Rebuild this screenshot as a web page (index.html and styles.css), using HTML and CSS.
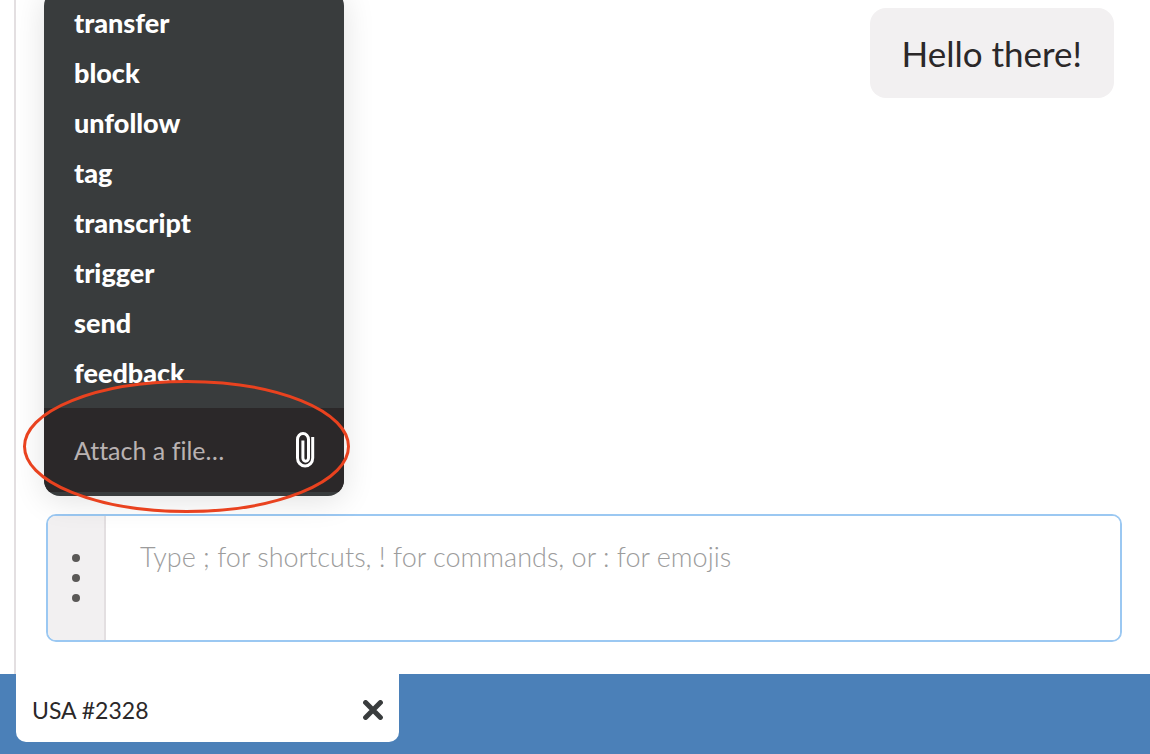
FILE: index.html
```html
<!DOCTYPE html>
<html lang="en">
<head>
<meta charset="utf-8">
<meta name="viewport" content="width=device-width, initial-scale=1">
<title>Chat</title>
<link rel="stylesheet" href="styles.css">
</head>
<body>
<main class="chat">
  <div class="messages">
    <p class="bubble">Hello there!</p>
  </div>
  <div class="composer-area">
    <form class="composer">
      <button class="more" type="button" aria-label="Commands" aria-expanded="true">
        <svg width="8" height="48" viewBox="0 0 8 48" aria-hidden="true"><circle cx="4" cy="4" r="4"/><circle cx="4" cy="24" r="4"/><circle cx="4" cy="44" r="4"/></svg>
      </button>
      <textarea class="input" aria-label="Message" placeholder="Type ; for shortcuts, ! for commands, or : for emojis"></textarea>
    </form>
    <div class="menu">
      <div class="commands">
        <button class="command" type="button">transfer</button>
        <button class="command" type="button">block</button>
        <button class="command" type="button">unfollow</button>
        <button class="command" type="button">tag</button>
        <button class="command" type="button">transcript</button>
        <button class="command" type="button">trigger</button>
        <button class="command" type="button">send</button>
        <button class="command" type="button">feedback</button>
      </div>
      <button class="attach" type="button">
        <span>Attach a file…</span>
        <svg class="clip" width="20" height="36" viewBox="0 0 20 36" aria-hidden="true"><path d="M17.7 5V26A7.6 8 0 0 1 2.5 26V7.5A5.5 6 0 0 1 13.5 7.5V26A2.8 3.3 0 0 1 7.9 26V8.5"/></svg>
      </button>
    </div>
    <svg class="highlight" viewBox="0 0 328 134" aria-hidden="true"><ellipse cx="163.5" cy="66.5" rx="162" ry="65"/></svg>
  </div>
</main>
<footer class="dock">
  <div class="tab">
    <span>USA #2328</span>
    <button class="close" type="button" aria-label="Close chat">
      <svg width="20" height="20" viewBox="0 0 20 20" aria-hidden="true"><path d="M2.6 2.6 17.4 17.4M17.4 2.6 2.6 17.4"/></svg>
    </button>
  </div>
</footer>
</body>
</html>
```

FILE: styles.css
```css
* {
  box-sizing: border-box;
}

body {
  margin: 0;
  min-height: 100vh;
  display: flex;
  flex-direction: column;
  overflow: hidden;
  background: #fff;
  color: #2b2829;
  font-family: Lato, "Open Sans", sans-serif;
  font-variant-ligatures: none;
}

button {
  border: 0;
  padding: 0;
  background: none;
  color: inherit;
  font: inherit;
  font-variant-ligatures: none;
  cursor: pointer;
}

svg {
  display: block;
}

.chat {
  flex: 1;
  display: flex;
  flex-direction: column;
  margin-left: 14px;
  border-left: 2px solid #e3dfe1;
}

.messages {
  flex: 1;
  display: flex;
  flex-direction: column;
  align-items: flex-end;
  padding: 8px 36px;
}

.bubble {
  margin: 0;
  padding: 22px 32px;
  border-radius: 16px;
  background: #f2f0f1;
  font-size: 35px;
  line-height: 46px;
}

.composer-area {
  position: relative;
  margin: 0 28px 32px 30px;
}

.composer {
  display: flex;
  height: 128px;
  border: 2px solid #9bc8f2;
  border-radius: 10px;
  overflow: hidden;
}

.more {
  width: 58px;
  display: flex;
  align-items: center;
  justify-content: center;
  border-right: 2px solid #e3dfe1;
  background: #f2f0f1;
  fill: #5a5857;
}

.input {
  flex: 1;
  padding: 24px 34px;
  border: 0;
  outline: 0;
  resize: none;
  background: #fff;
  color: #2b2829;
  font: 300 27px/34px Lato, "Open Sans", sans-serif;
  font-variant-ligatures: none;
}

.input::placeholder {
  color: #9c9c9c;
}

.menu {
  position: absolute;
  left: -2px;
  bottom: calc(100% + 18px);
  width: 300px;
  padding: 8px 0 4px;
  border-radius: 16px;
  overflow: hidden;
  background: #393c3d;
  box-shadow: 0 4px 32px rgba(0, 0, 0, 0.12);
}

.commands {
  display: flex;
  flex-direction: column;
  padding-bottom: 10px;
}

.command {
  height: 50px;
  padding: 0 30px;
  color: #fff;
  font-size: 27px;
  font-weight: 900;
  line-height: 50px;
  text-align: left;
}

.attach {
  width: 100%;
  height: 84px;
  display: flex;
  align-items: center;
  justify-content: space-between;
  padding: 0 29px 0 30px;
  background: #2b2829;
  color: #b9b2b2;
  font-size: 25px;
}

.clip {
  fill: none;
  stroke: #fff;
  stroke-width: 3;
}

.highlight {
  position: absolute;
  left: -23px;
  bottom: 128px;
  width: 328px;
  fill: none;
  stroke: #e9421f;
  stroke-width: 3;
  pointer-events: none;
}

.dock {
  height: 80px;
  padding: 0 16px 12px;
  background: #4b80b8;
}

.tab {
  width: 383px;
  height: 100%;
  display: flex;
  align-items: center;
  justify-content: space-between;
  padding: 4px 16px 0;
  border-radius: 0 0 10px 10px;
  background: #fff;
  font-size: 23px;
}

.close {
  stroke: #393c3d;
  stroke-width: 5;
  stroke-linecap: round;
}
```
